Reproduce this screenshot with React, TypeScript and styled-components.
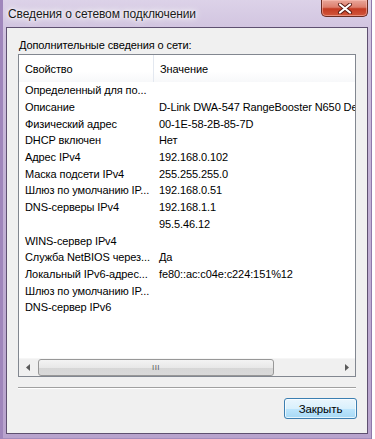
import styled, { createGlobalStyle } from "styled-components";

interface NetRow {
  name: string;
  value: string;
}

const ROWS: NetRow[] = [
  { name: "Определенный для по...", value: "" },
  { name: "Описание", value: "D-Link DWA-547 RangeBooster N650 Desktop Adapter" },
  { name: "Физический адрес", value: "00-1E-58-2B-85-7D" },
  { name: "DHCP включен", value: "Нет" },
  { name: "Адрес IPv4", value: "192.168.0.102" },
  { name: "Маска подсети IPv4", value: "255.255.255.0" },
  { name: "Шлюз по умолчанию IP...", value: "192.168.0.51" },
  { name: "DNS-серверы IPv4", value: "192.168.1.1" },
  { name: "", value: "95.5.46.12" },
  { name: "WINS-сервер IPv4", value: "" },
  { name: "Служба NetBIOS через...", value: "Да" },
  { name: "Локальный IPv6-адрес...", value: "fe80::ac:c04e:c224:151%12" },
  { name: "Шлюз по умолчанию IP...", value: "" },
  { name: "DNS-сервер IPv6", value: "" },
];

const GlobalStyle = createGlobalStyle`
  body {
    margin: 0;
    background: #ffffff;
    font-family: "Liberation Sans", Arial, sans-serif;
    font-size: 11px;
    letter-spacing: -0.1px;
    color: #000;
  }
`;

export default function App() {
  return (
    <>
      <GlobalStyle />
      <Window>
        <TitleBar>
          <TitleText>Сведения о сетевом подключении</TitleText>
          <CloseButton aria-label="close">
            <svg width="16" height="11" viewBox="0 0 16 11">
              <path d="M3 1.5 L13 9.5 M13 1.5 L3 9.5" stroke="#5a1a12" strokeWidth="4" strokeLinecap="round" />
              <path d="M3 1.5 L13 9.5 M13 1.5 L3 9.5" stroke="#ffffff" strokeWidth="2.2" strokeLinecap="round" />
            </svg>
          </CloseButton>
        </TitleBar>
        <Client>
          <GroupLabel>Дополнительные сведения о сети:</GroupLabel>
          <ListBox>
            <Header>
              <HeaderCell $width={135}>Свойство</HeaderCell>
              <HeaderCell>Значение</HeaderCell>
            </Header>
            <Rows>
              {ROWS.map((row, i) => (
                <Row key={i}>
                  <NameCell>{row.name}</NameCell>
                  <ValueCell>{row.value}</ValueCell>
                </Row>
              ))}
            </Rows>
            <HScroll>
              <ArrowButton>
                <svg width="4" height="7" viewBox="0 0 4 7">
                  <path d="M4 0 L0 3.5 L4 7 Z" fill="#5a5a5a" />
                </svg>
              </ArrowButton>
              <Track>
                <Thumb>
                  <Grip>III</Grip>
                </Thumb>
              </Track>
              <ArrowButton>
                <svg width="4" height="7" viewBox="0 0 4 7">
                  <path d="M0 0 L4 3.5 L0 7 Z" fill="#5a5a5a" />
                </svg>
              </ArrowButton>
            </HScroll>
          </ListBox>
          <Separator />
          <ButtonRow>
            <DialogButton>Закрыть</DialogButton>
          </ButtonRow>
        </Client>
      </Window>
    </>
  );
}

const Window = styled.div`
  box-sizing: border-box;
  width: 372px;
  height: 439px;
  display: flex;
  flex-direction: column;
  padding: 0 4px 5px 6px;
  background: linear-gradient(
    180deg,
    #dcd2e8 0%,
    #cfc1de 8%,
    #c3b2d6 40%,
    #b8a3cd 100%
  );
  box-shadow: inset 3px 0 0 #9f86bb, inset -1px 0 0 #8f78aa, inset 0 -1px 0 #a38cbd;
`;

const TitleBar = styled.div`
  height: 27px;
  display: flex;
  align-items: flex-start;
  justify-content: space-between;
`;

const TitleText = styled.div`
  margin: 6px 0 0 2px;
  font-size: 12px;
  line-height: 16px;
  color: #1a1a1a;
  text-shadow: 0 0 6px #ffffff, 0 0 10px #ffffff, 0 0 3px #ffffff;
`;

const CloseButton = styled.div`
  box-sizing: border-box;
  width: 47px;
  height: 17px;
  display: flex;
  align-items: center;
  justify-content: center;
  border: 1px solid #6b2c22;
  border-top: none;
  border-radius: 0 0 5px 5px;
  background: linear-gradient(180deg, #e9a79a 0%, #dd7e6c 45%, #c43b22 55%, #d2573c 100%);
  box-shadow: inset 0 0 0 1px rgba(255, 200, 190, 0.5);
`;

const Client = styled.div`
  flex: 1;
  display: flex;
  flex-direction: column;
  padding: 9px 11px 0 11px;
  background: #f0f0f0;
  border: 1px solid #5e5070;
`;

const GroupLabel = styled.div`
  line-height: 16px;
  margin-bottom: 1px;
  padding-left: 1px;
`;

const ListBox = styled.div`
  box-sizing: border-box;
  height: 323px;
  display: flex;
  flex-direction: column;
  background: #ffffff;
  border: 1px solid #828790;
`;

const Header = styled.div`
  height: 27px;
  display: flex;
  align-items: center;
  background: linear-gradient(180deg, #ffffff 0%, #ffffff 60%, #f7f8fa 100%);
`;

const HeaderCell = styled.div<{ $width?: number }>`
  box-sizing: border-box;
  height: 100%;
  display: flex;
  align-items: center;
  padding-left: 6px;
  padding-top: 1px;
  ${(p) => (p.$width ? `width: ${p.$width}px; border-right: 1px solid #e3e8f0;` : "flex: 1;")}
`;

const Rows = styled.div`
  flex: 1;
  display: flex;
  flex-direction: column;
  overflow: hidden;
`;

const Row = styled.div`
  height: 16.7px;
  display: flex;
  align-items: center;
  white-space: nowrap;
`;

const NameCell = styled.div`
  box-sizing: border-box;
  width: 135px;
  padding-left: 6px;
  overflow: hidden;
`;

const ValueCell = styled.div`
  flex: 1;
  padding-left: 5px;
  overflow: hidden;
`;

const HScroll = styled.div`
  height: 17px;
  display: flex;
  align-items: stretch;
  background: #f0f0f0;
  border-top: 1px solid #f6f6f6;
`;

const ArrowButton = styled.div`
  width: 17px;
  display: flex;
  align-items: center;
  justify-content: center;
`;

const Track = styled.div`
  flex: 1;
  display: flex;
  align-items: stretch;
  padding: 0 64px 0 2px;
`;

const Thumb = styled.div`
  box-sizing: border-box;
  flex: 1;
  display: flex;
  align-items: center;
  justify-content: center;
  border: 1px solid #979797;
  border-radius: 3px;
  background: linear-gradient(180deg, #f3f3f3 0%, #e8e8e8 50%, #d6d6d6 52%, #dadada 100%);
`;

const Grip = styled.span`
  font-size: 8px;
  letter-spacing: 0.5px;
  color: #5c5c5c;
`;

const Separator = styled.div`
  margin-top: 10px;
  height: 0;
  border-top: 1px solid #a0a0a0;
  border-bottom: 1px solid #ffffff;
`;

const ButtonRow = styled.div`
  display: flex;
  justify-content: flex-end;
  margin-top: 9px;
  margin-right: -1px;
`;

const DialogButton = styled.div`
  box-sizing: border-box;
  width: 73px;
  height: 21px;
  display: flex;
  align-items: center;
  justify-content: center;
  border: 1px solid #3c7fb1;
  border-radius: 3px;
  background: linear-gradient(180deg, #eaf6fd 0%, #d9f0fc 50%, #bee6fd 51%, #a7d9f5 100%);
  box-shadow: inset 0 0 0 1px rgba(255, 255, 255, 0.7);
  font-size: 11.5px;
`;
